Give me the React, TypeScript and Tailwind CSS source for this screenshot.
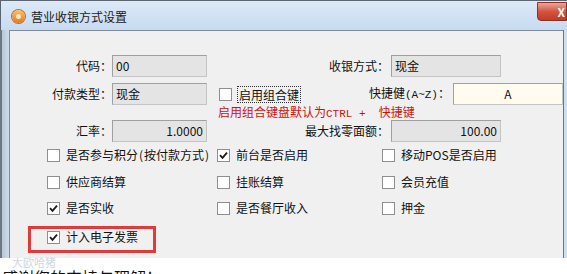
import React from "react";

const cjk = "font-['Noto_Sans_CJK_SC','Noto_Sans',sans-serif]";

function Box({ checked }: { checked?: boolean }) {
  return (
    <span className="flex h-[13px] w-[13px] shrink-0 items-center justify-center border border-[#8e8f8f] bg-white">
      {checked && (
        <svg width="9" height="9" viewBox="0 0 9 9">
          <path d="M1 4.2 L3.5 6.8 L8 1.6" fill="none" stroke="#1c1c1c" strokeWidth="1.8" />
        </svg>
      )}
    </span>
  );
}

function Check({ label, checked, w }: { label: React.ReactNode; checked?: boolean; w: string }) {
  return (
    <div className={`flex h-[14px] items-center gap-[6px] ${w}`}>
      <Box checked={checked} />
      <span className="whitespace-nowrap text-[12px] leading-[14px] text-[#111]">{label}</span>
    </div>
  );
}

function Field({
  value,
  w,
  align = "left",
  bg = "bg-[#e4e4e4]",
}: {
  value: string;
  w: string;
  align?: "left" | "right" | "center";
  bg?: string;
}) {
  const a = align === "right" ? "justify-end" : align === "center" ? "justify-center" : "justify-start";
  return (
    <div
      className={`flex h-[22px] items-center ${a} ${w} ${bg} border border-t-[#a0a0a0] border-l-[#a0a0a0] border-r-[#c4c4c4] border-b-[#c4c4c4] px-[3px] text-[12px] leading-[14px] text-[#111]`}
    >
      {value}
    </div>
  );
}

export default function App() {
  return (
    <div className={`relative h-[274px] w-[567px] overflow-hidden bg-white ${cjk}`}>
      {/* title bar */}
      <div className="flex h-[30px] items-start border-t border-l border-[#5b6470] bg-gradient-to-b from-[#dce9f7] to-[#c7dbf1]">
        <div className="ml-[11px] mt-[9px] flex h-[13px] w-[13px] items-center justify-center rounded-full bg-gradient-to-b from-[#f9c26a] to-[#e0781c] ring-1 ring-[#c46a1c]">
          <span className="h-[5px] w-[5px] rounded-full bg-[#fde7b8]" />
        </div>
        <span className="ml-[6px] mt-[8px] text-[12px] leading-[16px] text-[#1a1a1a]">营业收银方式设置</span>
        <div className="ml-auto mt-[1px] flex h-[19px] w-[30px] items-center justify-end rounded-bl-[4px] border border-[#8a3228] bg-gradient-to-b from-[#e9a597] via-[#d5533f] to-[#c23b26] pr-[1px]">
          <span className="text-[12px] font-bold leading-[12px] text-white">X</span>
        </div>
      </div>

      <div className="flex h-[228px]">
        <div className="w-[9px] border-l-2 border-[#6e7884] bg-gradient-to-r from-[#b9c6d4] to-[#cfdcea]" />
        <div className="flex flex-1 flex-col border-l border-t border-[#7d8b9b] bg-[#f0f0f0]">
          {/* row 1 */}
          <div className="mt-[24px] flex h-[22px] items-center">
            <span className="w-[102px] text-right text-[12px] text-[#111]">代码：</span>
            <Field value="00" w="w-[95px]" />
            <span className="w-[184px] pr-[2px] text-right text-[12px] text-[#111]">收银方式：</span>
            <Field value="现金" w="w-[110px]" />
          </div>
          {/* row 2 */}
          <div className="mt-[6px] flex h-[22px] items-center">
            <span className="w-[102px] text-right text-[12px] text-[#111]">付款类型：</span>
            <Field value="现金" w="w-[95px]" />
            <span className="ml-[12px]">
              <Box />
            </span>
            <span className="ml-[5px] border border-dotted border-[#333] px-[1px] text-[12px] leading-[15px] text-[#111]">
              启用组合键
            </span>
            <span className="flex-1 pr-[3px] text-right text-[12px] text-[#111]">
              快捷健<span className="font-['Liberation_Mono',monospace] text-[11px]">(A~Z)</span>：
            </span>
            <Field value="A" w="w-[110px]" align="center" bg="bg-[#fffcef]" />
          </div>
          {/* hint */}
          <div className="ml-[208px] h-[14px] whitespace-pre text-[12px] leading-[14px] text-[#d01010]">
            启用组合键盘默认为
            <span className="font-['Liberation_Mono',monospace] text-[11px]">CTRL +  </span>
            快捷键
          </div>
          {/* row 4 */}
          <div className="mt-[1px] flex h-[22px] items-center">
            <span className="w-[102px] text-right text-[12px] text-[#111]">汇率：</span>
            <Field value="1.0000" w="w-[95px]" align="right" />
            <span className="w-[184px] pr-[2px] text-right text-[12px] text-[#111]">最大找零面额：</span>
            <Field value="100.00" w="w-[110px]" align="right" />
          </div>

          {/* checkboxes */}
          <div className="ml-[37px] mt-[6px] flex">
            <Check
              label={
                <>
                  是否参与积分<span className="mx-[1px]">(</span>按付款方式<span className="ml-[1px]">)</span>
                </>
              }
              w="w-[170px]"
            />
            <Check label="前台是否启用" checked w="w-[165px]" />
            <Check label="移动POS是否启用" w="w-[150px]" />
          </div>
          <div className="ml-[37px] mt-[13px] flex">
            <Check label="供应商结算" w="w-[170px]" />
            <Check label="挂账结算" w="w-[165px]" />
            <Check label="会员充值" w="w-[150px]" />
          </div>
          <div className="ml-[37px] mt-[12px] flex">
            <Check label="是否实收" checked w="w-[170px]" />
            <Check label="是否餐厅收入" w="w-[165px]" />
            <Check label="押金" w="w-[150px]" />
          </div>
          <div className="ml-[18px] mt-[11px] h-[27px] w-[128px] border-[3px] border-[#e2393b] pl-[16px] pt-[1px]">
            <Check label="计入电子发票" checked w="w-[100px]" />
          </div>
        </div>
        <div className="w-[4px] border-l border-[#6d7783] bg-[#cfdff0]" />
      </div>

      {/* faint watermark and cut-off caption */}
      <div className="absolute left-[12px] top-[256px] text-[11px] leading-[12px] text-[#cfd7df]">大欧哈猪</div>
      <div className="ml-[2px] mt-[9px] text-[16px] leading-[20px] text-[#111]">感谢您的支持与理解！</div>
    </div>
  );
}
